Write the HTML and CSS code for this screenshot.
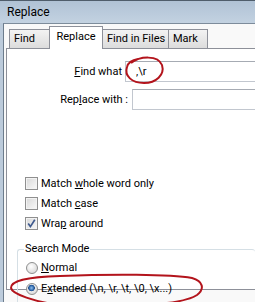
FILE: index.html
```html
<!DOCTYPE html>
<html>
	<head>
		<meta charset="utf-8">
		<title>Replace</title>
		<link rel="stylesheet" href="styles.css">
	</head>
	<body>
		<div class="window">
			<div class="titlebar">Replace</div>
			<div class="client">
				<div class="tabs">
					<div class="tab tab-find">Find</div>
					<div class="tab tab-replace active">Replace</div>
					<div class="tab tab-files">Find in Files</div>
					<div class="tab tab-mark">Mark</div>
				</div>
				<div class="panel">
					<div class="field-row find-row">
						<label class="field-label"><u>F</u>ind what</label>
						<input class="field-input" type="text" value=",\r">
					</div>
					<div class="field-row repl-row">
						<label class="field-label">Rep<u>l</u>ace with :</label>
						<input class="field-input" type="text" value="">
					</div>

					<div class="checks">
						<div class="check-row"><span class="box"></span><span>Match <u>w</u>hole word only</span></div>
						<div class="check-row"><span class="box"></span><span>Match <u>c</u>ase</span></div>
						<div class="check-row"><span class="box checked"><svg width="11" height="11" viewBox="0 0 11 11"><path d="M2.2 5.6 L4.4 8.6 L8.8 1.8" fill="none" stroke="#3f5a8e" stroke-width="1.7"/></svg></span><span>Wra<u>p</u> around</span></div>
					</div>

					<fieldset class="group">
						<legend>Search Mode</legend>
						<div class="radio-row"><span class="radio"></span><span><u>N</u>ormal</span></div>
						<div class="radio-row"><span class="radio on"></span><span>E<u>x</u>tended (\n, \r, \t, \0, \x...)</span></div>
						<div class="radio-row"><span class="radio"></span><span>Re<u>g</u>ular expression</span></div>
					</fieldset>
				</div>
			</div>

			<svg class="marks" width="255" height="302" viewBox="0 0 255 302">
				<path d="M131 62 C140 55, 158 54, 162 64 C165 74, 156 82, 144 82 C132 82, 124 75, 127 66 C128 62, 132 59, 138 58" fill="none" stroke="#b3141c" stroke-width="2"/>
				<path d="M60 304 C35 301, 12 293, 11 287 C11 280, 25 276, 60 275 C110 273, 170 273, 192 277 C203 280, 205 288, 197 294 C188 300, 170 302, 140 305" fill="none" stroke="#b3141c" stroke-width="2"/>
			</svg>
		</div>
	</body>
</html>
```

FILE: styles.css
```css
body		{ margin: 0 ; font-family: Roboto, "Noto Sans", sans-serif ; font-size: 11px ; color: #000 ; }
u			{ text-decoration: underline ; text-underline-offset: 1px ; }

.window		{ position: relative ; width: 255px ; height: 302px ; overflow: hidden ; box-sizing: border-box ; border-top: 1px solid #4f5d6b ; background: #bccbdb ; }
.titlebar	{ height: 22px ; line-height: 22px ; padding-left: 7px ; font-size: 12px ; background: linear-gradient(#b0c2d5, #c3d2e1) ; }
.client		{ height: 279px ; margin-left: 3px ; border-left: 1px solid #6c7c8c ; border-top: 1px solid #7d8c9b ; background: #f9f9f9 ; }

.tabs		{ display: flex ; align-items: flex-end ; height: 24px ; padding-left: 5px ; }
.tab		{ height: 19px ; line-height: 18px ; box-sizing: border-box ; padding-left: 4px ; margin-left: -1px ; border: 1px solid #8d9099 ; border-bottom: none ; background: linear-gradient(#f3f3f3, #dcdcdc) ; white-space: nowrap ; }
.tab.active	{ position: relative ; z-index: 1 ; height: 23px ; margin-bottom: -1px ; padding: 1px 0 0 0 ; text-align: center ; background: #fff ; }
.tab-find	{ width: 41px ; margin-left: 0 ; }
.tab-replace { width: 54px ; }
.tab-files	{ width: 67px ; }
.tab-mark	{ width: 40px ; }

.panel		{ height: 240px ; margin-left: 2px ; border: 1px solid #8d9099 ; border-right: none ; background: #fff ; }

.field-row	{ display: flex ; align-items: center ; height: 21px ; }
.find-row	{ margin-top: 12px ; gap: 3px ; }
.repl-row	{ margin-top: 7px ; gap: 4px ; }
.field-label { flex: none ; text-align: right ; white-space: nowrap ; }
.find-row .field-label { width: 115px ; }
.repl-row .field-label { width: 121px ; }
.field-input { flex: none ; width: 160px ; height: 21px ; box-sizing: border-box ; margin: 0 ; padding: 0 0 0 10px ; border: 1px solid #c2c7cf ; border-top-color: #a6abb3 ; font: inherit ; outline: none ; }

.checks		{ margin: 63px 0 0 18px ; }
.check-row	{ display: flex ; align-items: center ; gap: 3px ; height: 20px ; white-space: nowrap ; }
.box		{ flex: none ; display: flex ; align-items: center ; justify-content: center ; width: 13px ; height: 13px ; box-sizing: border-box ; border: 1px solid #8f8f8f ; background: linear-gradient(135deg, #d8d8d8, #f9f9f9) ; box-shadow: inset 0 0 0 1px #f3f3f3 ; }

.group		{ margin: 8px 0 0 10px ; padding: 0 0 0 6px ; border: 1px solid #d5dfe5 ; border-radius: 3px ; border-right: none ; }
.group legend { padding: 0 1px ; line-height: 16px ; }
.radio-row	{ display: flex ; align-items: center ; gap: 3px ; height: 21px ; margin-left: 2px ; white-space: nowrap ; }
.radio		{ flex: none ; width: 12px ; height: 12px ; box-sizing: border-box ; border-radius: 50% ; border: 1px solid #8e8f8f ; background: radial-gradient(circle at 40% 35%, #ffffff, #d0d0d0) ; }
.radio.on	{ background: radial-gradient(circle at 45% 40%, #8fc0ef 0, #2a63a8 2.5px, #1d4a85 3px, transparent 3.6px), radial-gradient(circle at 40% 35%, #ffffff, #d0d0d0) ; }

.marks		{ position: absolute ; left: 0 ; top: 0 ; pointer-events: none ; }
```
